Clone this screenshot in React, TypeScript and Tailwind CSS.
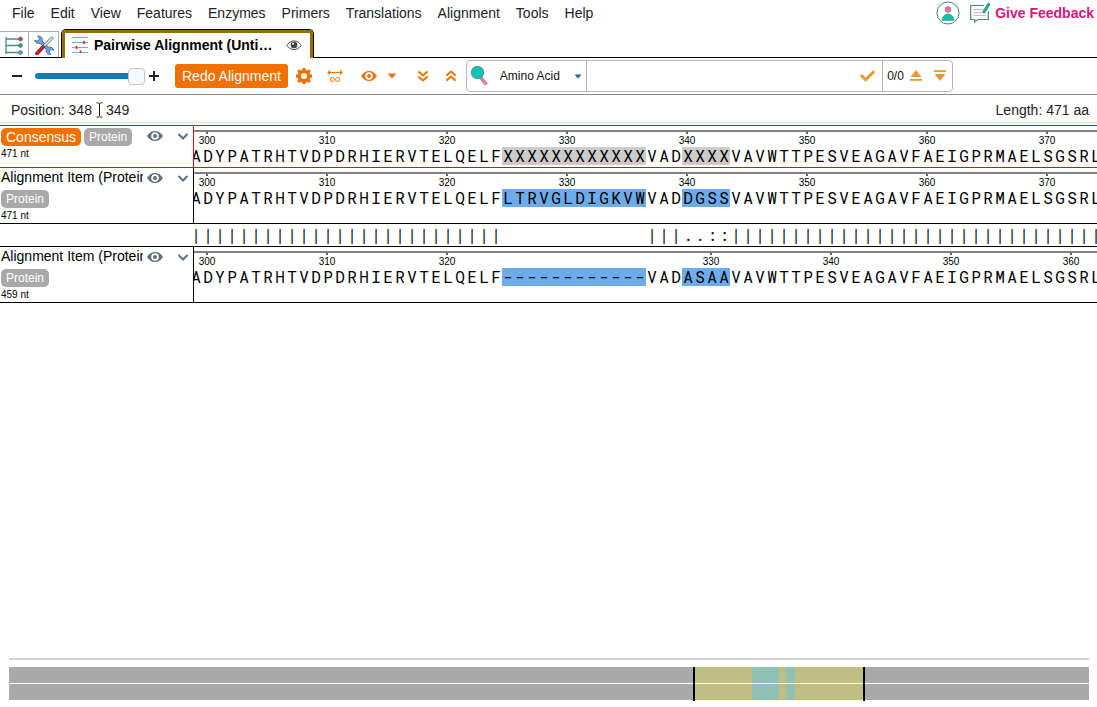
import { useState } from "react";
import { FaCheck } from "react-icons/fa";

interface Tick {
  label: number;
  afterGap?: boolean;
}

interface Run {
  text: string;
  mark?: "gray" | "blue";
}

interface Track {
  id: string;
  name: string;
  consensus?: boolean;
  length: number;
  ticks: Tick[];
  runs: Run[];
}

const HEAD = "ADYPATRHTVDPDRHIERVTELQELF";
const TAIL = "VAVWTTPESVEAGAVFAEIGPRMAELSGSRL";
const TOTAL = 471;

const FULL_TICKS: Tick[] = [300, 310, 320, 330, 340, 350, 360, 370].map((label) => ({ label }));

const CONSENSUS: Track = {
  id: "consensus",
  name: "Consensus",
  consensus: true,
  length: 471,
  ticks: FULL_TICKS,
  runs: [
    { text: HEAD },
    { text: "XXXXXXXXXXXX", mark: "gray" },
    { text: "VAD" },
    { text: "XXXX", mark: "gray" },
    { text: TAIL },
  ],
};

const FIRST: Track = {
  id: "first",
  name: "Alignment Item (Protein)",
  length: 471,
  ticks: FULL_TICKS,
  runs: [
    { text: HEAD },
    { text: "LTRVGLDIGKVW", mark: "blue" },
    { text: "VAD" },
    { text: "DGSS", mark: "blue" },
    { text: TAIL },
  ],
};

const SECOND: Track = {
  id: "second",
  name: "Alignment Item (Protein)",
  length: 459,
  ticks: [
    { label: 300 },
    { label: 310 },
    { label: 320 },
    { label: 330, afterGap: true },
    { label: 340 },
    { label: 350 },
    { label: 360 },
  ],
  runs: [
    { text: HEAD },
    { text: "------------", mark: "blue" },
    { text: "VAD" },
    { text: "ASAA", mark: "blue" },
    { text: TAIL },
  ],
};

const MATCHES = "|".repeat(26) + " ".repeat(12) + "|||..::" + "|".repeat(31);

const MENUS = [
  "File",
  "Edit",
  "View",
  "Features",
  "Enzymes",
  "Primers",
  "Translations",
  "Alignment",
  "Tools",
  "Help",
];

// [first residue, residue count] of each mismatch block
const MISMATCHES = [
  [324, 12],
  [339, 4],
];

const percent = (residues: number) => `${(residues / TOTAL) * 100}%`;

function EyeIcon({ className }: { className: string }) {
  return (
    <svg viewBox="0 0 16 16" className={className} fill="currentColor" fillRule="evenodd">
      <path d="M8 3C4.8 3 1.900 4.900 0 8c1.900 3.100 4.800 5 8 5s6.100-1.900 8-5c-1.900-3.100-4.800-5-8-5zm0 1.200a3.800 3.800 0 1 1 0 7.600 3.800 3.800 0 0 1 0-7.600zM8 6a2 2 0 1 0 0 4 2 2 0 0 0 0-4z" />
    </svg>
  );
}

function GearIcon() {
  return (
    <svg viewBox="0 0 16 16" className="size-4" fill="currentColor" fillRule="evenodd">
      <path d="M6.500 0h3l.4 2 1.200.5 1.700-1.200 2 2-1.200 1.700.5 1.200 2 .4v3l-2 .4-.5 1.200 1.200 1.700-2 2-1.700-1.200-1.200.5-.4 2h-3l-.4-2-1.200-.5-1.700 1.200-2-2 1.200-1.700-.5-1.200-2-.4v-3l2-.4.5-1.200-1.200-1.700 2-2 1.700 1.200L6.100 2zM8 5.100a3 3 0 1 0 0 6 3 3 0 0 0 0-6z" />
    </svg>
  );
}

function WidthIcon() {
  return (
    <svg viewBox="0 0 16 16" className="size-4" fill="none" stroke="currentColor">
      <path d="M1 4.500h14M3 2.500l-2 2 2 2M13 2.500l2 2-2 2" strokeWidth="1.200" />
      <path
        d="M8 11.500c-1-1.500-1.700-2-2.600-2a2 2 0 0 0 0 4c.9 0 1.600-.5 2.600-2 1-1.500 1.700-2 2.600-2a2 2 0 0 1 0 4c-.9 0-1.600-.5-2.600-2z"
        strokeWidth="1"
      />
    </svg>
  );
}

function DoubleChevron({ up }: { up?: boolean }) {
  return (
    <svg
      viewBox="0 0 16 16"
      className={`size-4 ${up ? "rotate-180" : ""}`}
      fill="none"
      stroke="currentColor"
      strokeWidth="2"
      strokeLinecap="round"
    >
      <path d="M4 4l4 3.500L12 4M4 9l4 3.500L12 9" />
    </svg>
  );
}

function TreeIcon() {
  return (
    <svg viewBox="0 0 20 20" className="size-5" fill="none">
      <path d="M2 2v17M2 4h13M2 10.500h13M2 17.500h13" stroke="#4d8c82" strokeWidth="1.300" />
      <circle cx="16.500" cy="4" r="2" fill="#d9363e" stroke="#666" strokeWidth=".6" />
      <circle cx="16.500" cy="10.500" r="2" fill="#27ae60" stroke="#666" strokeWidth=".6" />
      <circle cx="16.500" cy="17.500" r="2" fill="#5b9bf0" stroke="#666" strokeWidth=".6" />
    </svg>
  );
}

function ToolsIcon() {
  return (
    <svg viewBox="0 0 20 20" className="size-5" fill="none">
      <path d="M6 6l9 9" stroke="#33618f" strokeWidth="3.600" />
      <path
        d="M3.500 1c2.500-.3 4.800 1.200 5 3.500.1 2.200-1.500 4-3.800 4C2.600 8.500 1 7.300.8 5.200L3 6l2-.8.500-2zM17 19.500c-2.500.2-4.800-1-5-3.400-.1-2.200 1.500-4 3.800-4 2.100 0 3.700 1.300 3.800 3.400L17.500 14.500l-2 .8-.3 2z"
        fill="#6ba6e0"
        stroke="#33618f"
        strokeWidth=".8"
      />
      <path d="M6 6l9 9" stroke="#6ba6e0" strokeWidth="2.200" />
      <path d="M18 3l-8 8" stroke="#447c77" strokeWidth="3" strokeLinecap="round" />
      <path d="M18 3l-8 8" stroke="#f2faf8" strokeWidth="1.500" strokeLinecap="round" />
      <path d="M9 12l-6 6.500" stroke="#8f1f28" strokeWidth="3.800" strokeLinecap="round" />
      <path d="M9 12l-6 6.500" stroke="#c8202c" strokeWidth="2.400" strokeLinecap="round" />
    </svg>
  );
}

function AlignmentIcon() {
  return (
    <svg viewBox="0 0 16 16" className="size-4" fill="none">
      <path d="M0 .5h16M0 5.500h16M0 10.500h16M0 15.500h16" stroke="#6fb3aa" />
      <path d="M12 4v3M4.500 9v3M8.500 13.500V16" stroke="#e81123" strokeWidth="1.500" />
    </svg>
  );
}

function TabEyeIcon() {
  return (
    <svg viewBox="0 0 16 12" className="h-3 w-4" fill="none" stroke="#444">
      <path d="M.8 6.500C3 3 5.500 2 8 2s5 1 7.200 4.500C13 9.500 10.500 10.500 8 10.500S3 9.500.8 6.500z" strokeWidth="1" />
      <circle cx="8" cy="6" r="3.300" fill="#444" stroke="none" />
      <circle cx="7" cy="4.800" r="1" fill="#fff" stroke="none" />
    </svg>
  );
}

function AccountIcon() {
  return (
    <svg viewBox="0 0 24 24" className="size-6" fill="none">
      <circle cx="12" cy="12" r="11" stroke="#3f8379" strokeWidth="1" />
      <path d="M6 19.500c.3-4 2.600-6.500 6-6.500s5.700 2.500 6 6.500z" fill="#0cc0ad" stroke="#3f8379" strokeWidth=".5" />
      <circle cx="12" cy="8.500" r="3" fill="#f868a8" stroke="#8a6d80" strokeWidth=".5" />
    </svg>
  );
}

function FeedbackIcon() {
  return (
    <svg viewBox="0 0 20 20" className="size-5" fill="none">
      <path d="M14 2.500H.7v14h4v2.500l3-2.500h10.600V8" stroke="#4d8c82" strokeWidth="1.200" />
      <path d="M3.500 6.500h10M3.500 9.500h10M3.500 12.500h12" stroke="#f7a6ca" strokeWidth="1.200" />
      <path d="M14 9l4.500-7.500" stroke="#3f8379" strokeWidth="3" strokeLinecap="round" />
      <path d="M14 9l4.500-7.500" stroke="#0cb8a6" strokeWidth="1.800" strokeLinecap="round" />
    </svg>
  );
}

function SearchIcon() {
  return (
    <svg viewBox="0 0 20 22" className="h-[22px] w-5" fill="none">
      <path d="M11 13l5.500 6.500" stroke="#8a6d80" strokeWidth="3.400" />
      <path d="M11 13l5.500 6.500" stroke="#f27bb5" strokeWidth="2.200" />
      <circle cx="7.500" cy="7.500" r="6.200" fill="#0cc5b2" stroke="#3f8379" strokeWidth=".8" />
    </svg>
  );
}

function TypeTag() {
  return (
    <span className="inline-block rounded-[5px] bg-[#a9a9a9] px-[5px] text-xs leading-[18px] text-white">
      Protein
    </span>
  );
}

function TrackLabel({ track }: { track: Track }) {
  return (
    <div
      className={`flex w-[194px] shrink-0 justify-between border-r pl-px ${
        track.consensus ? "border-[#f00]" : "border-black"
      }`}
    >
      <div className="w-[142px] overflow-hidden whitespace-nowrap">
        {track.consensus ? (
          <div className="flex gap-[3px] pt-0.5">
            <span className="rounded-[5px] bg-[#f07000] px-[5px] text-sm leading-[18px] text-white">
              {track.name}
            </span>
            <TypeTag />
          </div>
        ) : (
          <>
            <div className="text-sm leading-[18px]">{track.name}</div>
            <div className="flex pt-1">
              <TypeTag />
            </div>
          </>
        )}
        <div className="text-[10px] leading-[15px]">{track.length} nt</div>
      </div>
      <div className="flex items-start gap-3 pt-0.5 pr-0.5 text-[#5c7080]">
        <button type="button" aria-label="Toggle visibility">
          <EyeIcon className="size-4" />
        </button>
        <button type="button" aria-label="Track options">
          <svg viewBox="0 0 16 16" className="size-4" fill="none" stroke="currentColor" strokeWidth="2" strokeLinecap="round">
            <path d="M4 6.500l4 4 4-4" />
          </svg>
        </button>
      </div>
    </div>
  );
}

function Cells({ text }: { text: string }) {
  return (
    <>
      {text.split("").map((char, index) => (
        <span key={index} className="flex w-3 shrink-0 justify-center">
          {char}
        </span>
      ))}
    </>
  );
}

function TrackRow({ track }: { track: Track }) {
  return (
    <div
      className={`flex border-t ${
        track.consensus ? "border-[#f00]" : "min-h-14 border-black"
      } ${track.id === "first" ? "border-t-[#f00]" : ""}`}
    >
      <TrackLabel track={track} />
      <div className="min-w-0 flex-1 overflow-hidden pt-1 pb-0.5">
        <div className="border-t-2 border-[#808080]">
          <div className="-ml-[47px] flex h-[15px] text-[10px] leading-[13px]">
            {track.ticks.map((tick) => (
              <div
                key={tick.label}
                className={`flex w-[120px] shrink-0 flex-col items-center ${tick.afterGap ? "ml-36" : ""}`}
              >
                <span className="h-0.5 w-0.5 shrink-0 bg-[#606060]" />
                <span>{tick.label}</span>
              </div>
            ))}
          </div>
        </div>
        <div className="-ml-1 flex font-['Roboto_Mono','Noto_Sans_Mono_CJK_SC','DejaVu_Sans_Mono',monospace] text-base leading-[18px]">
          {track.runs.map((run, index) => (
            <span
              key={index}
              className={`flex shrink-0 ${
                run.mark === "gray" ? "bg-[#cbcbcb]" : run.mark === "blue" ? "bg-[#6cacec]" : ""
              }`}
            >
              <Cells text={run.text} />
            </span>
          ))}
        </div>
      </div>
    </div>
  );
}

function MiniBar() {
  return (
    <div className="flex h-4 bg-[#a9a9a9]">
      {MISMATCHES.map(([start, count], index) => {
        const previous = index ? MISMATCHES[index - 1][0] + MISMATCHES[index - 1][1] : 0;
        return (
          <div
            key={start}
            className="bg-[#6bace9]"
            style={{ marginLeft: percent(start - previous), width: percent(count) }}
          />
        );
      })}
    </div>
  );
}

export default function App() {
  const [zoom, setZoom] = useState(10);
  const [query, setQuery] = useState("");
  const [searchType, setSearchType] = useState("Amino Acid");

  return (
    <div className="flex min-h-screen flex-col overflow-hidden bg-white font-['Liberation_Sans',Arial,sans-serif] text-sm text-black">
      <header className="flex h-[27px] items-center justify-between pr-[3px] pb-0.5 pl-1">
        <nav className="flex text-[#222]">
          {MENUS.map((menu) => (
            <button key={menu} type="button" className="px-2">
              {menu}
            </button>
          ))}
        </nav>
        <div className="flex items-center gap-[10px]">
          <button type="button" aria-label="Account">
            <AccountIcon />
          </button>
          <a href="#feedback" className="flex items-center gap-[5px] font-bold text-[#dd127b]">
            <FeedbackIcon />
            Give Feedback
          </a>
        </div>
      </header>

      <div className="flex h-[31px] shrink-0 items-end border-b border-black">
        <button type="button" aria-label="Open panels" className="flex h-[26px] w-[29px] items-center justify-center border-t border-r border-[#aaa]">
          <TreeIcon />
        </button>
        <button type="button" aria-label="Tools" className="flex h-[26px] w-[30px] items-center justify-center border-t border-r border-[#aaa]">
          <ToolsIcon />
        </button>
        <div className="relative -mb-px ml-0.5 w-[253px] rounded-t-[5px] border border-b-0 border-black bg-white">
          <button type="button" className="flex h-7 w-full items-center rounded-t border-3 border-b-0 border-[#936e00] pr-2 pb-0.5 pl-[7px] font-bold">
            <AlignmentIcon />
            <span className="pl-[6px]">Pairwise Alignment (Unti…</span>
            <span className="ml-auto">
              <TabEyeIcon />
            </span>
          </button>
        </div>
      </div>

      <div className="flex h-[37px] shrink-0 items-center border-b border-[#8a8a8a] pl-3 text-[#f07000]">
        <button type="button" aria-label="Zoom out" className="text-[#222]">
          <svg viewBox="0 0 10 10" className="size-[10px]" stroke="currentColor" strokeWidth="2">
            <path d="M0 5h10" />
          </svg>
        </button>
        <input
          type="range"
          aria-label="Zoom"
          min={0}
          max={10}
          value={zoom}
          onChange={(event) => setZoom(Number(event.target.value))}
          className="my-0 mr-1 ml-[13px] h-[6px] w-[110px] appearance-none rounded-full bg-[#137cbd] [&::-webkit-slider-thumb]:size-[17px] [&::-webkit-slider-thumb]:appearance-none [&::-webkit-slider-thumb]:rounded [&::-webkit-slider-thumb]:border [&::-webkit-slider-thumb]:border-[#bfc4c9] [&::-webkit-slider-thumb]:bg-[#f7f8f9]"
        />
        <button type="button" aria-label="Zoom in" className="text-[#222]">
          <svg viewBox="0 0 10 10" className="size-[10px]" stroke="currentColor" strokeWidth="2">
            <path d="M0 5h10M5 0v10" />
          </svg>
        </button>
        <button type="button" className="ml-4 rounded-[3px] bg-[#f07000] px-[7px] leading-6 whitespace-nowrap text-white">
          Redo Alignment
        </button>
        <button type="button" aria-label="Settings" className="ml-2">
          <GearIcon />
        </button>
        <button type="button" aria-label="Fit width" className="ml-[15px]">
          <WidthIcon />
        </button>
        <button type="button" aria-label="Visibility" className="ml-[18px] flex items-center gap-[10px]">
          <EyeIcon className="size-4" />
          <svg viewBox="0 0 10 6" className="h-[6px] w-[10px]" fill="currentColor">
            <path d="M.5 .5h9L5 5.500z" />
          </svg>
        </button>
        <button type="button" aria-label="Next difference" className="ml-[18px]">
          <DoubleChevron />
        </button>
        <button type="button" aria-label="Previous difference" className="ml-3">
          <DoubleChevron up />
        </button>

        <div className="ml-[7px] flex h-8 w-[487px] items-stretch rounded border border-[#b5b5b5] text-xs text-[#111]">
          <div className="flex w-[120px] items-center border-r border-[#b5b5b5] pl-[3px]">
            <SearchIcon />
            <label className="relative flex flex-1 items-center">
              <select
                aria-label="Search type"
                value={searchType}
                onChange={(event) => setSearchType(event.target.value)}
                className="w-full appearance-none bg-transparent pl-[10px] outline-none"
              >
                <option>Amino Acid</option>
                <option>DNA</option>
              </select>
              <svg viewBox="0 0 8 5" className="pointer-events-none absolute right-1 h-[5px] w-2" fill="#106ba3">
                <path d="M.5 .5h7L4 4.500z" />
              </svg>
            </label>
          </div>
          <div className="flex flex-1 items-center border-r border-[#b5b5b5] pr-[7px]">
            <input
              type="text"
              aria-label="Search sequence"
              value={query}
              onChange={(event) => setQuery(event.target.value)}
              className="min-w-0 flex-1 bg-transparent px-2 outline-none"
            />
            <FaCheck className="h-4 w-[15px] text-[#ee9430]" />
          </div>
          <div className="flex items-center pr-[6px] pl-1 text-[#ee9430]">
            <span className="text-[#111]">0/0</span>
            <button type="button" aria-label="Previous match" className="ml-[6px]">
              <svg viewBox="0 0 12 12" className="size-3" fill="currentColor">
                <path d="M6 0l5.500 7H.5zM0 9h12v1.700H0z" />
              </svg>
            </button>
            <button type="button" aria-label="Next match" className="ml-3">
              <svg viewBox="0 0 12 12" className="size-3" fill="currentColor">
                <path d="M6 11L.5 4h11zM0 .3h12V2H0z" />
              </svg>
            </button>
          </div>
        </div>
      </div>

      <div className="mb-0.5 flex h-7 shrink-0 items-center justify-between border-b border-[#e2e2e2] pt-0.5 pr-2 pl-[11px] text-[#222]">
        <div className="flex items-center">
          <span>Position: 348</span>
          <svg viewBox="0 0 14 16" className="h-4 w-[14px]" fill="none" stroke="#222">
            <path d="M4.500 .8c1.500 0 2.500.2 3 1.200.5-1 1.500-1.200 3-1.200M7.500 2v12M4.500 15.200c1.500 0 2.500-.2 3-1.200.5 1 1.500 1.200 3 1.200" />
          </svg>
          <span>349</span>
        </div>
        <span>Length: 471 aa</span>
      </div>

      <main className="border-b border-black">
        <TrackRow track={CONSENSUS} />
        <TrackRow track={FIRST} />
        <div className="flex h-[23px] border-t border-black pl-[190px] font-['Roboto_Mono','Liberation_Mono',monospace] text-base leading-[22px] text-[#111]">
          <Cells text={MATCHES} />
        </div>
        <TrackRow track={SECOND} />
      </main>

      <footer className="mt-auto px-2 pb-[6px]">
        <div className="ml-px border-t-2 border-[#d2d2d2] pt-[7px]">
          <div className="relative flex flex-col gap-px pb-px">
            <MiniBar />
            <MiniBar />
            <div
              className="absolute inset-y-0 border-x-2 border-black bg-[#ffff19]/25"
              style={{ left: percent(298.3), width: percent(75) }}
            />
          </div>
        </div>
      </footer>
    </div>
  );
}
